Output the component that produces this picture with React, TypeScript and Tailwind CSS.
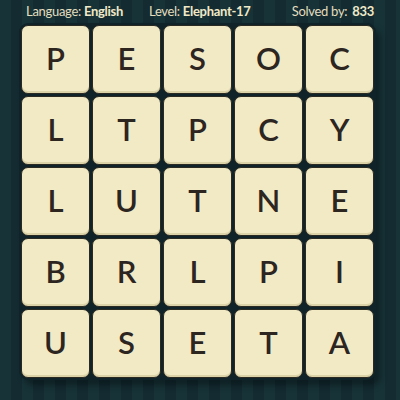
const letters = [
  ["P", "E", "S", "O", "C"],
  ["L", "T", "P", "C", "Y"],
  ["L", "U", "T", "N", "E"],
  ["B", "R", "L", "P", "I"],
  ["U", "S", "E", "T", "A"],
];

function Tile({ ch }: { ch: string }) {
  return (
    <div className="flex h-[69px] w-[69px] items-center justify-center rounded-[7px] border border-[#2a2a22] bg-[#f2eac5] pb-[2px] shadow-[inset_0_-2px_0_#ddd3a8] text-[31px] font-semibold text-[#2d251f]">
      {ch}
    </div>
  );
}

export default function App() {
  return (
    <div className="h-[400px] w-[400px] overflow-hidden bg-[repeating-linear-gradient(90deg,#173338_0px,#173338_11px,#132b31_11px,#132b31_22px)] font-['Lato',sans-serif]">
      <div className="flex h-[22px] items-center pt-px text-[13px] tracking-[-0.3px] text-[#e4ddbe]">
        <span className="ml-[26px]">
          Language: <b className="font-bold text-[#f0e9c8]">English</b>
        </span>
        <span className="ml-[26px]">
          Level: <b className="font-bold text-[#f0e9c8]">Elephant-17</b>
        </span>
        <span className="ml-auto mr-[26px]">
          Solved by: <b className="ml-0.5 font-bold text-[#f0e9c8]">833</b>
        </span>
      </div>
      <div className="ml-[19px] mt-px w-[357px] rounded-[9px] bg-[#0f2328] p-[2px] shadow-[5px_6px_6px_rgba(0,0,0,0.35)]">
        <div className="grid grid-cols-5 gap-[2px]">
          {letters.flat().map((ch, i) => (
            <Tile key={i} ch={ch} />
          ))}
        </div>
      </div>
    </div>
  );
}
